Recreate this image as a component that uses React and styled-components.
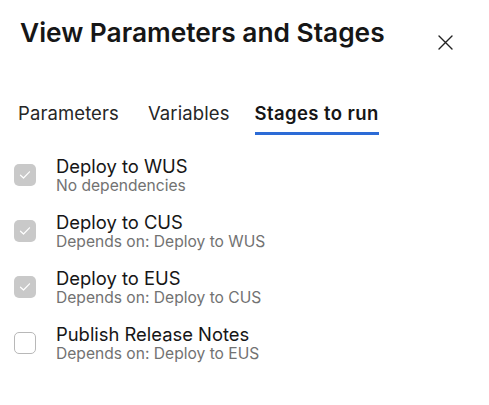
import React from "react";
import styled, { createGlobalStyle } from "styled-components";

const Global = createGlobalStyle`
  html, body { margin: 0; padding: 0; background: #ffffff; }
  body { font-family: Inter, "Noto Sans", sans-serif; color: #1b1b1b; }
`;

const Panel = styled.div`
  width: 489px;
  height: 405px;
  box-sizing: border-box;
  padding: 14px 0 0 0;
  display: flex;
  flex-direction: column;
`;

const Header = styled.div`
  display: flex;
  align-items: center;
  justify-content: space-between;
  padding: 0 36px 0 20px;
  height: 36px;
`;

const Title = styled.h1`
  margin: 0;
  font-size: 26.3px;
  font-weight: 600;
  letter-spacing: 0;
  color: #161616;
`;

const CloseButton = styled.button`
  border: none;
  background: none;
  padding: 0;
  width: 16px;
  height: 16px;
  display: flex;
  align-items: center;
  justify-content: center;
  margin-top: 20px;
  cursor: pointer;
`;

const Tabs = styled.div`
  display: flex;
  gap: 25px;
  padding: 0 0 0 18px;
  margin-top: 52px;
  & > :first-child { margin-right: 4px; }
`;

const Tab = styled.div`
  font-size: 18.5px;
  font-weight: ${(p) => (p.$active ? 600 : 400)};
  color: ${(p) => (p.$active ? "#161616" : "#262626")};
  padding-bottom: 8px;
  border-bottom: 3px solid ${(p) => (p.$active ? "#2c6bd6" : "transparent")};
  letter-spacing: ${(p) => (p.$active ? "0.4px" : "0.1px")};
`;

const List = styled.div`
  display: flex;
  flex-direction: column;
  gap: 16px;
  padding: 0 0 0 14px;
  margin-top: 20px;
`;

const Row = styled.div`
  display: flex;
  align-items: center;
  gap: 20px;
`;

const Box = styled.div`
  width: 22px;
  height: 22px;
  box-sizing: border-box;
  border-radius: 5px;
  display: flex;
  align-items: center;
  justify-content: center;
  background: ${(p) => (p.$checked ? "#c9c9c9" : "#ffffff")};
  border: ${(p) => (p.$checked ? "none" : "1px solid #b8b8b8")};
`;

const Texts = styled.div`
  display: flex;
  flex-direction: column;
`;

const Name = styled.div`
  font-size: 18.4px;
  line-height: 22px;
  color: #161616;
`;

const Sub = styled.div`
  font-size: 15.6px;
  line-height: 18px;
  color: #727272;
`;

const stages = [
  { name: "Deploy to WUS", sub: "No dependencies", checked: true },
  { name: "Deploy to CUS", sub: "Depends on: Deploy to WUS", checked: true },
  { name: "Deploy to EUS", sub: "Depends on: Deploy to CUS", checked: true },
  { name: "Publish Release Notes", sub: "Depends on: Deploy to EUS", checked: false },
];

export default function App() {
  return (
    <>
      <Global />
      <Panel>
        <Header>
          <Title>View Parameters and Stages</Title>
          <CloseButton aria-label="Close">
            <svg width="15" height="15" viewBox="0 0 15 15">
              <path d="M1 1 L14 14 M14 1 L1 14" stroke="#222" strokeWidth="1.4" strokeLinecap="round" />
            </svg>
          </CloseButton>
        </Header>
        <Tabs>
          <Tab>Parameters</Tab>
          <Tab>Variables</Tab>
          <Tab $active>Stages to run</Tab>
        </Tabs>
        <List>
          {stages.map((s) => (
            <Row key={s.name}>
              <Box $checked={s.checked}>
                {s.checked && (
                  <svg width="12" height="10" viewBox="0 0 12 10">
                    <path d="M1.5 5.2 L4.5 8 L10.5 1.8" fill="none" stroke="#fff" strokeWidth="1.2" strokeLinecap="round" strokeLinejoin="round" />
                  </svg>
                )}
              </Box>
              <Texts>
                <Name>{s.name}</Name>
                <Sub>{s.sub}</Sub>
              </Texts>
            </Row>
          ))}
        </List>
      </Panel>
    </>
  );
}
